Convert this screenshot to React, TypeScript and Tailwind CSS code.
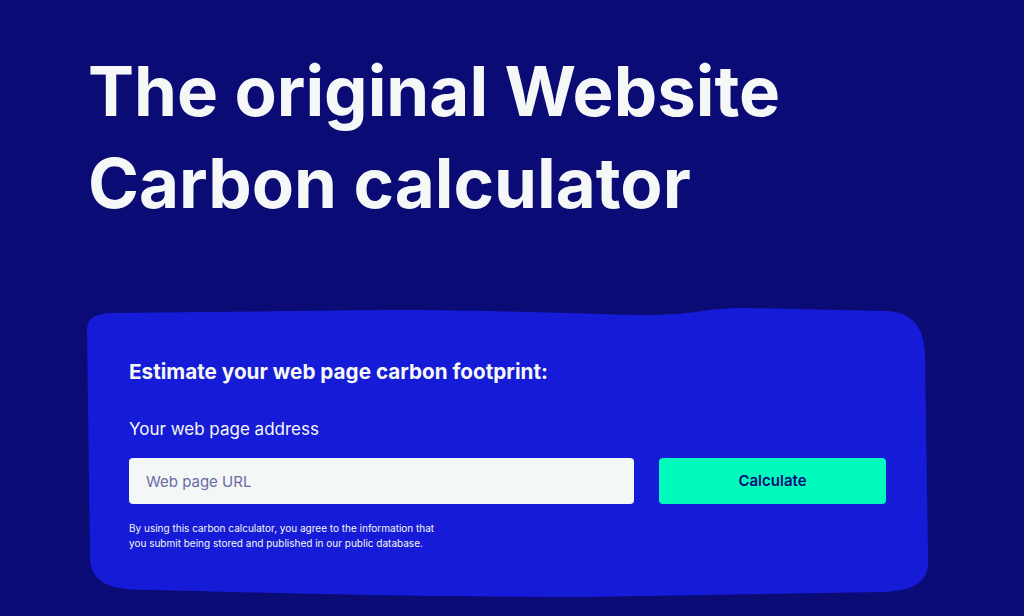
import React, { useState } from 'react';

const font = { fontFamily: 'Inter, "Noto Sans", sans-serif' };

const Blob: React.FC = () => (
    <svg className="absolute inset-0 h-full w-full" viewBox="0 0 845 291" preserveAspectRatio="none" aria-hidden>
        <path
            d="M 2 24 C 2 11 10 7 26 6 L 300 3 C 420 3 500 7 560 8 C 610 8 620 1 660 1 L 800 4 C 828 5 838 20 840 45 L 843 250 C 845 275 830 283 800 285 L 500 290 C 300 290 120 284 60 283 C 18 283 6 272 5 250 Z"
            fill="#161bd8"
        />
    </svg>
);

const App: React.FC = () => {
    const [url, setUrl] = useState('');

    return (
        <div className="min-h-[616px] w-full bg-[#0b0b76] text-[#f5f8f6] overflow-hidden" style={font}>
            <div className="pl-[88px] pt-[45px]">
                <h1 className="text-[69px] leading-[92px] font-bold">
                    The original Website
                    <br />
                    Carbon calculator
                </h1>
            </div>

            <div className="relative ml-[85px] mt-[78px] w-[845px] h-[291px]">
                <Blob />
                <div className="relative px-[44px] pt-[51px]">
                    <h2 className="text-[20.7px] leading-[28px] font-bold">Estimate your web page carbon footprint:</h2>
                    <label htmlFor="url" className="block mt-[31px] text-[17px] leading-[24px]">Your web page address</label>
                    <div className="flex gap-[25px] mt-[17px]">
                        <input
                            id="url"
                            value={url}
                            onChange={(e) => setUrl(e.target.value)}
                            placeholder="Web page URL"
                            className="w-[505px] h-[46px] rounded-[4px] bg-[#f3f7f5] px-[17px] text-[15px] text-[#0b0b76] placeholder:text-[#6a6aa8] outline-none"
                        />
                        <button className="w-[227px] h-[46px] rounded-[4px] bg-[#00fbbd] text-[15px] font-semibold text-[#0b0b76]">
                            Calculate
                        </button>
                    </div>
                    <p className="mt-[17px] text-[10px] leading-[15px]">
                        By using this carbon calculator, you agree to the information that
                        <br />
                        you submit being stored and published in our public database.
                    </p>
                </div>
            </div>
        </div>
    );
};

export default App;
